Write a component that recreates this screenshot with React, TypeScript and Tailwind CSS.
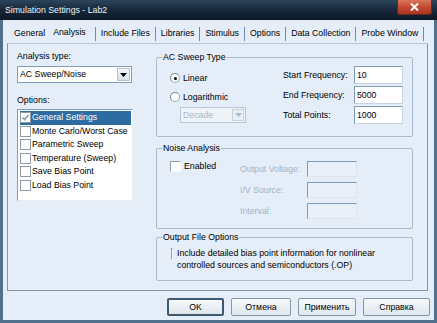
const tabs = ['Include Files', 'Libraries', 'Stimulus', 'Options', 'Data Collection', 'Probe Window'];
const options = ['General Settings', 'Monte Carlo/Worst Case', 'Parametric Sweep', 'Temperature (Sweep)', 'Save Bias Point', 'Load Bias Point'];

const ListCheck = ({ checked }: { checked?: boolean }) => (
  <span className="w-[11px] h-[11px] border border-[#8e9aa6] bg-white flex items-center justify-center shrink-0">
    {checked && (
      <svg width="9" height="9" viewBox="0 0 9 9">
        <path d="M1.5 4.5 L3.5 6.5 L7.5 2" stroke="#8d96a0" strokeWidth="1.6" fill="none" />
      </svg>
    )}
  </span>
);

const SunkenCheck = () => (
  <span className="w-[11px] h-[11px] border-t border-l border-[#8ea0b3] border-r border-b border-r-[#f4f7fb] border-b-[#f4f7fb] bg-white shrink-0" />
);

const Radio = ({ on }: { on?: boolean }) => (
  <span className="w-[10px] h-[10px] rounded-full border border-[#9aa9b8] border-t-[#7a8a9a] border-l-[#7a8a9a] bg-white flex items-center justify-center shrink-0">
    {on && <span className="w-[3px] h-[3px] rounded-full bg-black" />}
  </span>
);

const Input = ({ value, disabled }: { value?: string; disabled?: boolean }) => (
  <div
    className={
      disabled
        ? 'h-[16px] w-[50px] border-t border-l border-[#7f9db9] border-r border-b border-r-[#dbe4ee] border-b-[#dbe4ee] bg-[#e9f0f8]'
        : 'h-[18px] w-[49px] border border-[#7f9db9] border-r-[#c8d4e0] border-b-[#c8d4e0] bg-white pl-[2px] leading-[16px]'
    }
  >
    {value}
  </div>
);

const Button = ({ label, def, w }: { label: string; def?: boolean; w: string }) => (
  <div
    className={`${w} h-[18px] rounded-[2px] flex items-center justify-center bg-gradient-to-b from-[#f7f9fb] to-[#dfe6ee] ${
      def ? 'border-2 border-[#3f5870]' : 'border border-[#8496a8]'
    }`}
  >
    {label}
  </div>
);

export default function App() {
  return (
    <div className="w-[437px] h-[323px] bg-[#50708e] flex flex-col font-['Liberation_Sans',Arial,sans-serif] text-[8.75px] text-black leading-[11px] overflow-hidden">
      {/* title bar */}
      <div className="h-[20px] shrink-0 flex items-start justify-between bg-gradient-to-b from-[#2d455c] via-[#162839] to-[#0c1826]">
        <span className="text-[#eef3f8] pl-[5px] pt-[5px] leading-[11px]">Simulation Settings - Lab2</span>
        <div className="mr-[5px] w-[35px] h-[15px] rounded-b-[3px] bg-gradient-to-b from-[#d9765e] via-[#c24a31] to-[#a93520] border border-[#6a2a1c] border-t-0 flex items-center justify-center">
          <svg width="9" height="8" viewBox="0 0 9 8">
            <path d="M1 0.5 L8 7.5 M8 0.5 L1 7.5" stroke="white" strokeWidth="2" />
          </svg>
        </div>
      </div>

      <div className="flex-1 mx-[3px] mb-[3px] bg-[#e4edf8] flex flex-col">
        {/* tabs */}
        <div className="h-[23px] shrink-0 flex items-end pb-[4px] pl-[11px]">
          <span className="mr-[8px]">General</span>
          <span className="mr-[9px] pb-[1px]">Analysis</span>
          <span className="w-px h-[14px] bg-[#6f8aa5] mb-[-2px]" />
          {tabs.map((t) => (
            <div key={t} className="flex items-end">
              <span className="px-[5px]">{t}</span>
              <span className="w-px h-[14px] bg-[#6f8aa5] mb-[-2px]" />
            </div>
          ))}
        </div>

        {/* panel */}
        <div className="ml-[4px] w-[421px] h-[248px] shrink-0 border-l border-b border-r border-t border-[#7f96ad] border-t-[#b9c9da] flex">
          {/* left column */}
          <div className="w-[125px] pl-[9px] pt-[7px] flex flex-col shrink-0">
            <span>Analysis type:</span>
            <div className="mt-[4px] w-[115px] h-[17px] bg-white border border-[#7f9db9] flex items-center justify-between pl-[2px] pr-[1px]">
              <span>AC Sweep/Noise</span>
              <div className="w-[13px] h-[13px] bg-gradient-to-b from-[#f3f6fa] to-[#d7e1ec] border border-[#b5c4d3] flex items-center justify-center">
                <svg width="7" height="4" viewBox="0 0 7 4">
                  <path d="M0 0 H7 L3.5 4 Z" fill="black" />
                </svg>
              </div>
            </div>
            <span className="mt-[12px]">Options:</span>
            <div className="mt-[3px] w-[116px] h-[92px] bg-white border border-[#7f9db9] border-r-[#e6ecf2] border-b-[#e6ecf2] pt-[1px] pl-[2px] pr-[1px]">
              {options.map((o, i) => (
                <div
                  key={o}
                  className={`h-[13.5px] flex items-center gap-[1px] ${i === 0 ? 'bg-[#2d6ba3] text-white' : ''}`}
                >
                  <ListCheck checked={i === 0} />
                  <span className="whitespace-nowrap">{o}</span>
                </div>
              ))}
            </div>
          </div>

          {/* right column */}
          <div className="ml-[23px] w-[257px] flex flex-col">
            <fieldset className="mt-[8px] h-[85px] border border-[#a9bccf] rounded-[2px] flex">
              <legend className="ml-[5px] px-[1px] leading-[10px]">AC Sweep Type</legend>
              <div className="w-[126px] pl-[13px] pt-[10px] flex flex-col shrink-0">
                <div className="h-[12px] flex items-center gap-[3px]">
                  <Radio on />
                  <span>Linear</span>
                </div>
                <div className="mt-[7px] h-[12px] flex items-center gap-[3px]">
                  <Radio />
                  <span>Logarithmic</span>
                </div>
                <div className="mt-[4px] ml-[10px] w-[66px] h-[16px] border border-[#b9c8d8] bg-[#eef3f8] flex items-center justify-between pl-[2px] pr-[1px] text-[#a9b8c8]">
                  <span>Decade</span>
                  <div className="w-[12px] h-[12px] border border-[#c7d3df] bg-[#e9eff6] flex items-center justify-center">
                    <svg width="7" height="4" viewBox="0 0 7 4">
                      <path d="M0 0 H7 L3.5 4 Z" fill="#a9b8c8" />
                    </svg>
                  </div>
                </div>
              </div>
              <div className="pt-[4px] grid grid-cols-[71px_49px] gap-y-[2px] items-center">
                <span>Start Frequency:</span>
                <Input value="10" />
                <span>End Frequency:</span>
                <Input value="5000" />
                <span>Total Points:</span>
                <Input value="1000" />
              </div>
            </fieldset>

            <fieldset className="mt-[6px] h-[86px] border border-[#a9bccf] rounded-[2px] flex">
              <legend className="ml-[5px] px-[1px] leading-[10px]">Noise Analysis</legend>
              <div className="w-[83px] pl-[13px] pt-[7px] shrink-0">
                <div className="h-[12px] flex items-center gap-[3px]">
                  <SunkenCheck />
                  <span>Enabled</span>
                </div>
              </div>
              <div className="pt-[8px] grid grid-cols-[67px_50px] gap-y-[5px] items-center text-[#a3b4c6]">
                <span>Output Voltage:</span>
                <Input disabled />
                <span>I/V Source:</span>
                <Input disabled />
                <span>Interval:</span>
                <Input disabled />
              </div>
            </fieldset>

            <fieldset className="mt-[3px] h-[49px] border border-[#a9bccf] rounded-[2px]">
              <legend className="ml-[5px] px-[1px] leading-[10px]">Output File Options</legend>
              <div className="pl-[14px] pt-[5px] flex items-start gap-[4px] leading-[12px]">
                <span className="mt-[1px]">
                  <SunkenCheck />
                </span>
                <span>
                  Include detailed bias point information for nonlinear
                  <br />
                  controlled sources and semiconductors (.OP)
                </span>
              </div>
            </fieldset>
          </div>
        </div>

        {/* buttons */}
        <div className="mt-[7px] pr-[4px] flex justify-end gap-[7px]">
          <Button label="OK" def w="w-[57px]" />
          <Button label="Отмена" w="w-[60px]" />
          <Button label="Применить" w="w-[58px]" />
          <Button label="Справка" w="w-[67px]" />
        </div>
      </div>
    </div>
  );
}
